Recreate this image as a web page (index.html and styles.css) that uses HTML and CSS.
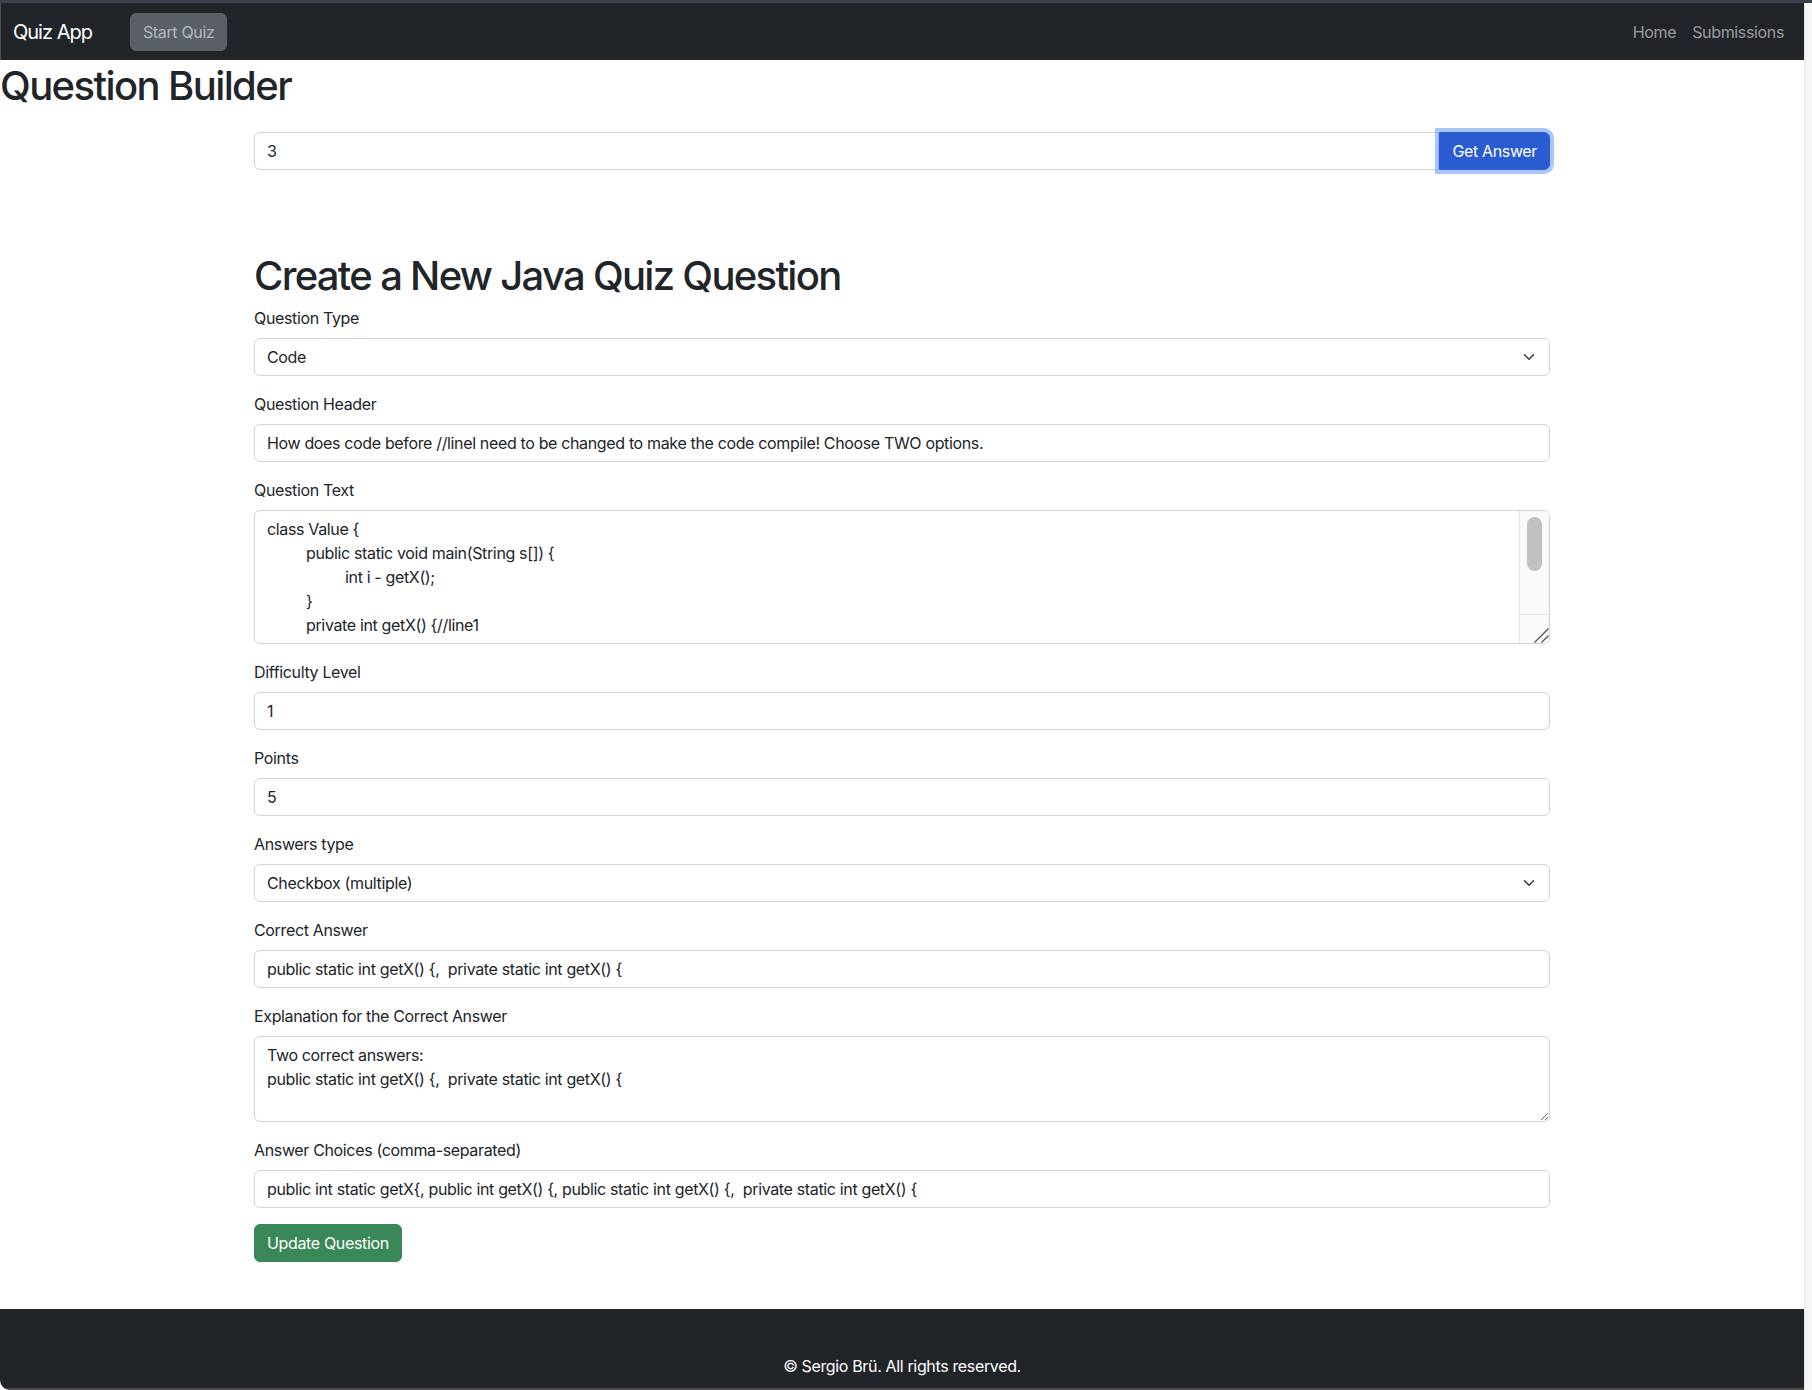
FILE: index.html
```html
<!DOCTYPE html>
<html lang="en">
<head>
<meta charset="utf-8">
<title>Quiz App - Question Builder</title>
<link rel="stylesheet" href="styles.css">
</head>
<body>
<div class="frame-top"></div>
<div class="shell">
  <div class="page">
    <nav class="navbar">
      <div class="nav-left">
        <a class="brand" href="#">Quiz App</a>
        <button class="btn btn-start" type="button">Start Quiz</button>
      </div>
      <div class="nav-right">
        <a class="nav-link" href="#">Home</a>
        <a class="nav-link" href="#">Submissions</a>
      </div>
    </nav>

    <main class="main">
      <h1 class="page-title">Question Builder</h1>

      <div class="container">
        <div class="input-group">
          <input class="form-control" type="text" value="3">
          <button class="btn btn-primary" type="button">Get Answer</button>
        </div>

        <h1 class="form-title">Create a New Java Quiz Question</h1>

        <form class="quiz-form">
          <div class="field">
            <label class="form-label">Question Type</label>
            <div class="select">Code</div>
          </div>
          <div class="field">
            <label class="form-label">Question Header</label>
            <input class="form-control" type="text" value="How does code before //linel need to be changed to make the code compile! Choose TWO options.">
          </div>
          <div class="field">
            <label class="form-label">Question Text</label>
            <div class="textarea-wrap">
              <textarea class="form-control code" rows="5">class Value {
	public static void main(String s[]) {
		int i - getX();
	}
	private int getX() {//line1
		return 0;
	}

	public int getY() {
		return 1;
	}
}</textarea>
              <div class="scrollbar" aria-hidden="true">
                <div class="scroll-thumb"></div>
                <div class="scroll-corner">
                  <svg width="28" height="28" viewBox="0 0 28 28">
                    <line x1="13.5" y1="27.5" x2="27.5" y2="13.5" stroke="#555" stroke-width="1.3"/>
                    <line x1="20.5" y1="27.5" x2="27.5" y2="20.5" stroke="#555" stroke-width="1.3"/>
                  </svg>
                </div>
              </div>
            </div>
          </div>
          <div class="field">
            <label class="form-label">Difficulty Level</label>
            <input class="form-control" type="text" value="1">
          </div>
          <div class="field">
            <label class="form-label">Points</label>
            <input class="form-control" type="text" value="5">
          </div>
          <div class="field">
            <label class="form-label">Answers type</label>
            <div class="select">Checkbox (multiple)</div>
          </div>
          <div class="field">
            <label class="form-label">Correct Answer</label>
            <input class="form-control" type="text" value="public static int getX() {,  private static int getX() {">
          </div>
          <div class="field">
            <label class="form-label">Explanation for the Correct Answer</label>
            <textarea class="form-control" rows="3">Two correct answers:
public static int getX() {,  private static int getX() {</textarea>
          </div>
          <div class="field">
            <label class="form-label">Answer Choices (comma-separated)</label>
            <input class="form-control" type="text" value="public int static getX{, public int getX() {, public static int getX() {,  private static int getX() {">
          </div>
          <button class="btn btn-success" type="button">Update Question</button>
        </form>
      </div>
    </main>

    <footer class="footer">
      <p>© Sergio Brü. All rights reserved.</p>
    </footer>
  </div>
  <div class="side-strip"></div>
</div>
</body>
</html>
```

FILE: styles.css
```css
* { box-sizing: border-box; }

html, body {
  margin: 0;
  padding: 0;
}

body {
  font-family: Inter, "Liberation Sans", sans-serif;
  font-size: 16px;
  line-height: 1.5;
  letter-spacing: -0.35px;
  color: #212529;
  background: #ffffff;
  height: 1390px;
  overflow: hidden;
}

.frame-top {
  height: 3px;
  background: #3a434e;
}

.shell {
  display: flex;
}

.page {
  width: 1804px;
  flex: none;
  background: #ffffff;
  border-bottom-left-radius: 10px;
  overflow: hidden;
}

.side-strip {
  flex: 1;
  background: #f6f6f6;
  border-left: 1px solid #e2e2e2;
}

/* Navbar */
.navbar {
  height: 57px;
  background: #212529;
  padding: 8px 12px;
  display: flex;
  align-items: center;
  justify-content: space-between;
  border-left: 1px solid #4a4f55;
}

.nav-left {
  display: flex;
  align-items: center;
}

.brand {
  color: #ffffff;
  text-decoration: none;
  font-size: 20px;
  line-height: 30px;
  letter-spacing: -1px;
  margin-right: 38px;
}

.btn {
  font-family: inherit;
  font-size: 16px;
  line-height: 24px;
  letter-spacing: -0.35px;
  padding: 6px 12px;
  border: 1px solid transparent;
  border-radius: 6px;
  cursor: pointer;
}

.btn-start {
  background: #5a6066;
  color: #b3b7bb;
  border-color: #5a6066;
}

.nav-right {
  display: flex;
  align-items: center;
}

.nav-link {
  color: rgba(255, 255, 255, 0.55);
  text-decoration: none;
  padding: 8px;
}

/* Main */
.page-title {
  margin: 2px 0 8px;
  font-size: 40px;
  font-weight: 500;
  line-height: 1.2;
  letter-spacing: -1.6px;
}

.container {
  width: 1296px;
  margin: 22px auto 0;
}

.input-group {
  display: flex;
}

.form-control {
  display: block;
  width: 100%;
  font-family: inherit;
  font-size: 16px;
  line-height: 24px;
  letter-spacing: -0.35px;
  color: #212529;
  padding: 6px 12px;
  border: 1px solid #ced4da;
  border-radius: 6px;
  background: #ffffff;
}

.input-group .form-control {
  flex: 1;
  border-top-right-radius: 0;
  border-bottom-right-radius: 0;
}

.btn-primary {
  background: #2a5bd0;
  border-color: #2a5bd0;
  color: #ffffff;
  border-top-left-radius: 0;
  border-bottom-left-radius: 0;
  box-shadow: 0 0 0 4px rgba(100, 150, 245, 0.55);
  position: relative;
}

.form-title {
  margin: 82px 0 6px;
  font-size: 40px;
  font-weight: 500;
  line-height: 1.2;
  letter-spacing: -1.7px;
}

.field {
  margin-bottom: 16px;
}

.form-label {
  display: block;
  margin-bottom: 8px;
}

.select {
  height: 38px;
  padding: 6px 36px 6px 12px;
  border: 1px solid #ced4da;
  border-radius: 6px;
  background-color: #ffffff;
  background-image: url("data:image/svg+xml,%3csvg xmlns='http://www.w3.org/2000/svg' viewBox='0 0 16 16'%3e%3cpath fill='none' stroke='%23343a40' stroke-linecap='round' stroke-linejoin='round' stroke-width='2' d='m2 5 6 6 6-6'/%3e%3c/svg%3e");
  background-repeat: no-repeat;
  background-position: right 12px center;
  background-size: 16px 12px;
}

textarea.form-control {
  resize: vertical;
  tab-size: 39px;
}

.textarea-wrap {
  position: relative;
}

textarea.code {
  resize: none;
  overflow: hidden;
  padding-right: 44px;
}

.scrollbar {
  position: absolute;
  top: 1px;
  right: 1px;
  bottom: 1px;
  width: 30px;
  background: #fafafa;
  border-left: 1px solid #e3e3e3;
  border-top-right-radius: 5px;
  border-bottom-right-radius: 5px;
}

.scroll-thumb {
  margin: 6px 0 0 7px;
  width: 15px;
  height: 54px;
  border-radius: 8px;
  background: #c1c1c1;
}

.scroll-corner {
  position: absolute;
  left: 0;
  right: 0;
  bottom: 0;
  height: 29px;
  border-top: 1px solid #e3e3e3;
  display: flex;
  justify-content: flex-end;
  align-items: flex-end;
}

.scroll-corner svg {
  display: block;
}

.btn-success {
  background: #3a8758;
  border-color: #3a8758;
  color: #ffffff;
}

/* Footer */
.footer {
  margin-top: 47px;
  background: #212529;
  color: #ffffff;
  text-align: center;
  padding: 45px 0 10px;
  border-bottom: 2px solid #4b4b4b;
}

.footer p {
  margin: 0;
}
```
